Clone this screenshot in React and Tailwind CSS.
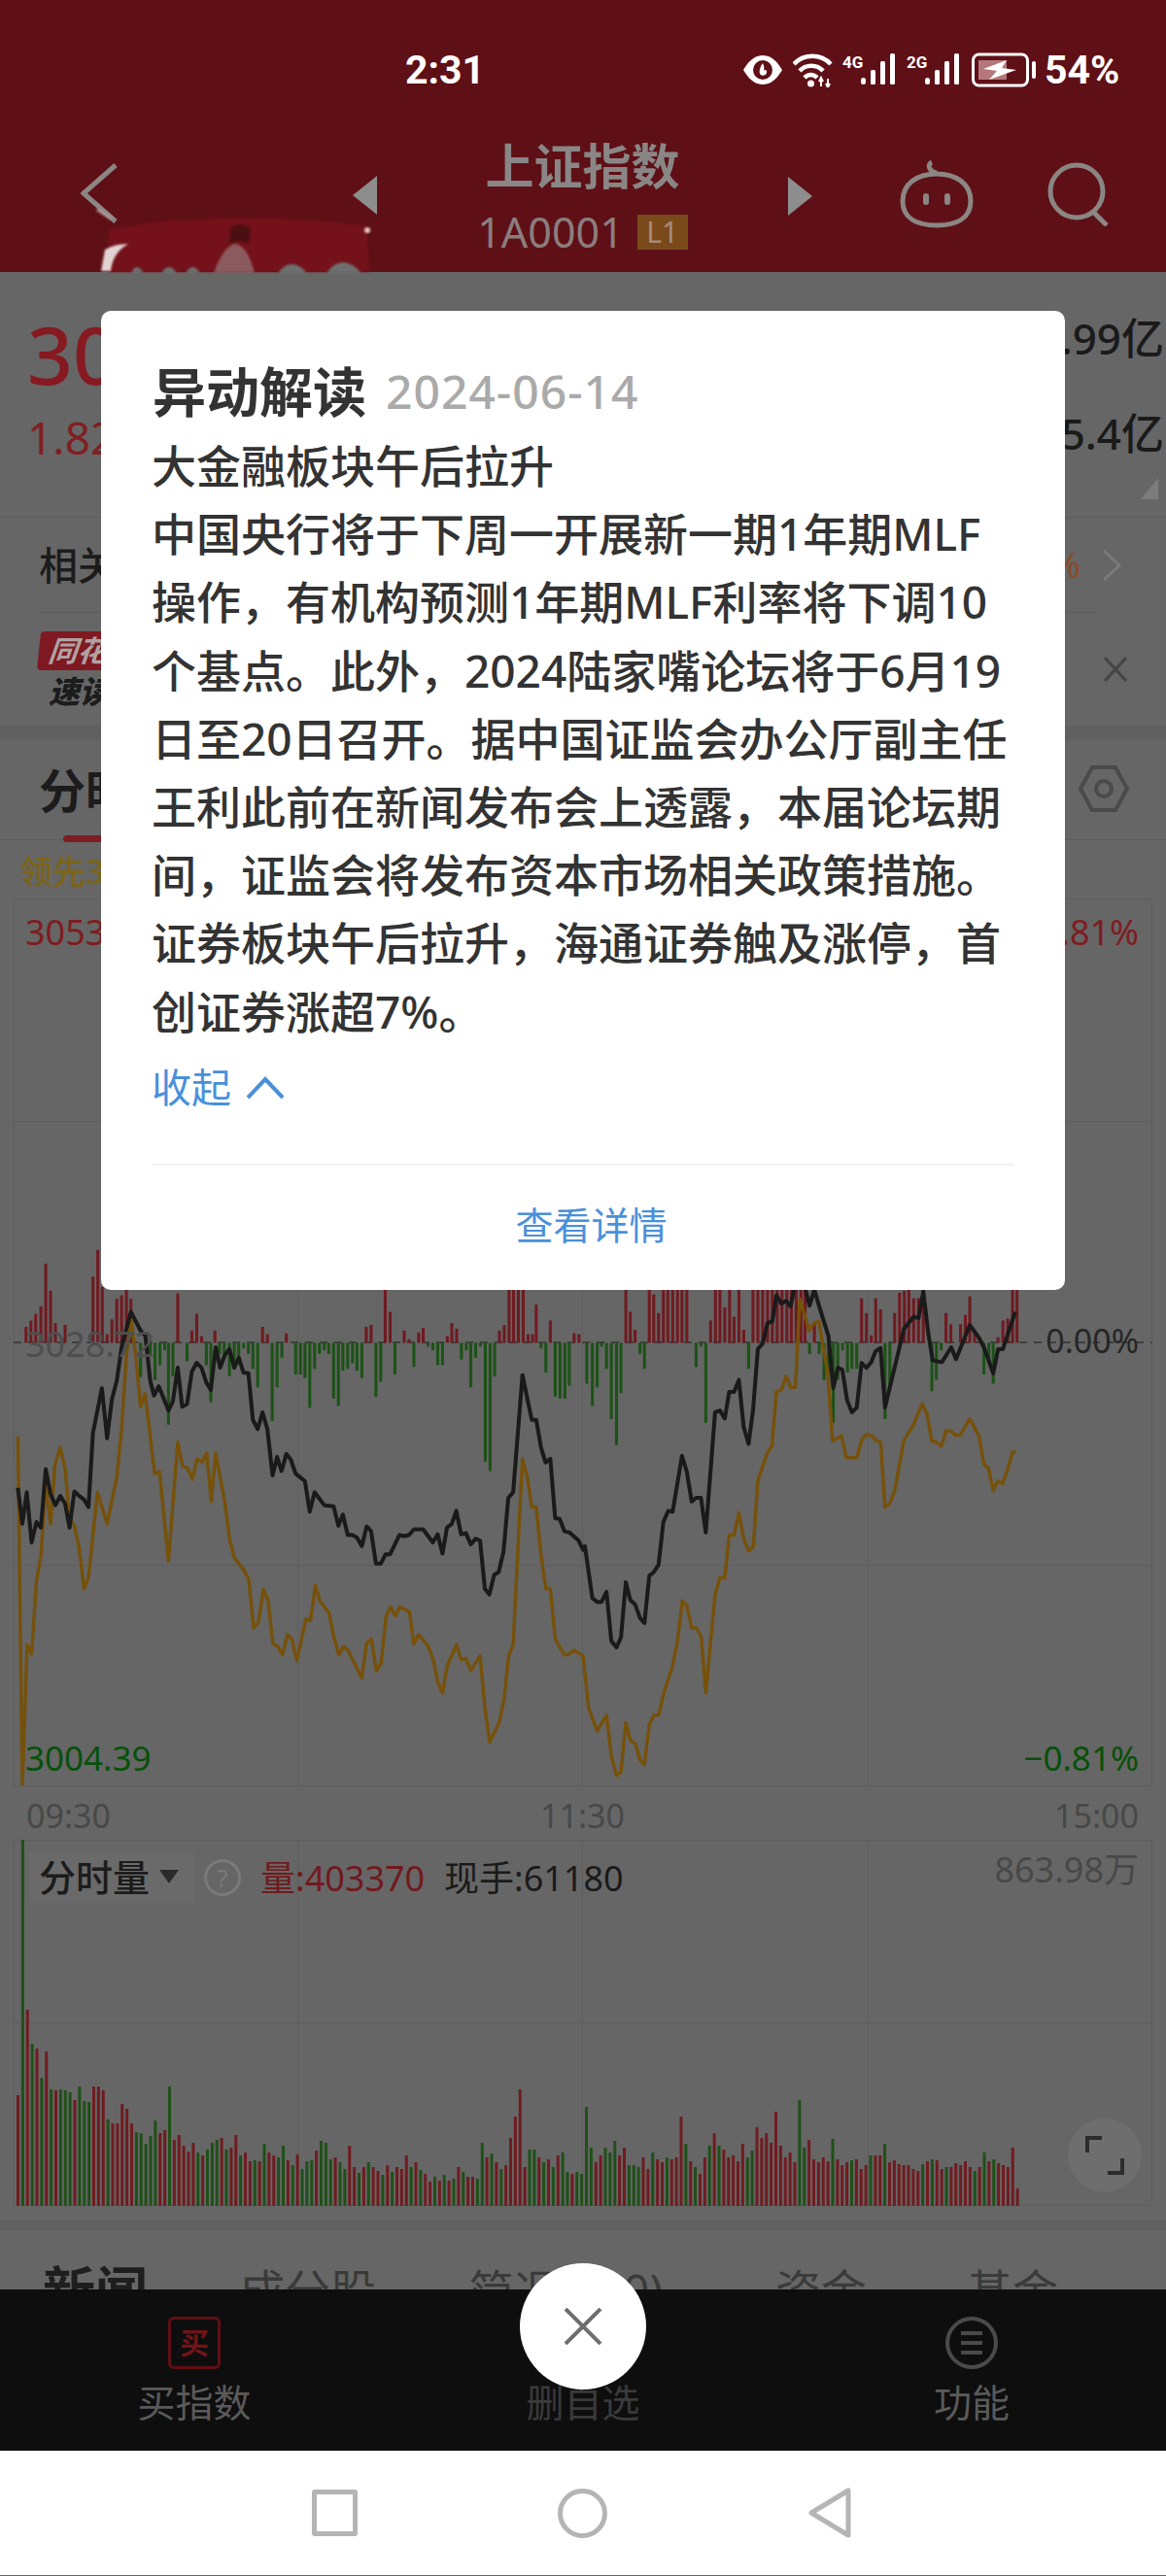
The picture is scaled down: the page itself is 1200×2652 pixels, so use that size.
import React from 'react';

// chart traces are read off at 2.613x, second half starts at 1568 in that scale
const parse = (s, dx = 0) => s.trim().split(/\s+/).map((p) => {
  const [x, y] = p.split(',').map(Number);
  return `${x + dx},${y}`;
}).join(' ');

const blackLine = parse('48,608 60,705 72,620 85,755 98,700 110,715 123,558 136,625 149,655 162,630 175,650 187,715 200,618 213,630 226,640 238,660 250,460 274,340 288,475 301,370 314,320 327,230 352,135 365,160 378,185 391,200 404,320 414,360 427,335 453,400 465,375 478,285 490,390 503,383 516,295 529,272 542,285 555,325 567,345 580,230 592,285 605,250 617,235 630,285 642,258 655,298 668,300 680,425 693,450 706,405 719,450 733,575 745,525 757,563 770,517 782,532 795,570 820,590 833,672 846,620 872,655 897,658 910,710 922,680 935,735 948,735 960,742 973,765 986,712 998,725 1011,812 1024,812 1037,787 1049,787 1074,735 1087,738 1100,735 1113,720 1138,720 1164,755 1177,733 1190,785 1202,715 1215,705 1227,670 1240,733 1253,730 1266,760 1279,745 1291,750 1304,880 1316,895 1329,842 1341,835 1354,780 1367,635 1380,620 1405,305 1430,425 1442,425 1455,500 1467,540 1480,530 1493,690 1505,692 1518,725 1531,728 1556,750 1568,775')
  + ' ' + parse('5,765 25,905 38,915 50,915 63,888 76,1020 90,1037 102,1010 115,862 127,910 140,922 153,958 165,972 178,845 190,835 203,815 216,700 229,670 241,672 266,522 279,565 292,645 304,635 317,635 330,728 355,405 368,400 381,422 393,350 406,350 419,318 432,445 445,490 457,400 470,235 483,220 496,165 509,160 520,90 533,112 546,105 558,120 571,60 590,40 609,118 622,75 635,120 660,200 673,340 685,285 697,290 710,372 723,405 736,392 749,272 762,285 775,270 787,240 800,232 812,392 863,180 889,148 902,152 915,80 928,190 940,265 953,268 965,270 990,230 1003,262 1040,170 1065,205 1078,230 1103,300 1116,235 1129,235 1162,135', 1568);

const goldLine = parse('48,470 60,1410 73,1030 85,1055 98,860 110,790 123,600 136,705 148,545 162,500 175,555 187,690 200,710 213,770 226,880 238,850 262,620 288,705 314,580 327,450 340,250 352,155 365,250 378,390 390,355 403,460 416,570 429,565 453,805 478,485 491,550 504,555 517,585 530,530 543,540 556,515 568,645 580,515 605,650 618,750 630,795 656,830 669,855 682,985 695,970 708,882 721,910 734,1028 747,1035 760,1057 773,1003 785,1015 798,1073 823,960 835,965 848,870 860,912 885,945 898,1010 911,1057 924,1035 936,1045 973,1120 986,1025 999,1015 1012,1100 1025,1080 1038,955 1050,928 1063,952 1076,928 1101,942 1113,1028 1126,1003 1152,1035 1165,1070 1177,1130 1190,1160 1203,1085 1228,1030 1240,1070 1253,1067 1266,1100 1291,1060 1304,1200 1317,1292 1342,1240 1355,1180 1368,1060 1380,1030 1405,530 1418,580 1430,660 1442,660 1455,790 1468,880 1480,880 1493,1015 1518,1058 1531,1055 1544,1045 1568,1060')
  + ' ' + parse('15,1200 38,1262 63,1220 76,1330 90,1382 102,1372 115,1240 128,1290 140,1295 153,1340 165,1352 178,1245 190,1220 203,1220 216,1165 241,1085 254,1020 267,912 279,925 292,985 305,985 318,1010 330,1160 355,895 368,850 381,850 393,735 406,735 419,675 432,745 445,778 458,765 470,590 495,515 508,495 520,350 533,345 546,308 558,338 571,338 583,100 608,185 621,165 634,160 658,300 671,482 695,468 708,527 736,527 749,480 762,465 775,467 787,480 800,485 812,660 825,650 838,615 863,480 888,440 912,382 925,410 938,482 950,485 963,497 976,455 989,455 1002,467 1015,465 1040,422 1065,470 1078,545 1090,555 1103,615 1116,590 1128,597 1141,560 1155,512 1165,512', 1568);

// [x, height], negative is a green bar under the zero line
const macdLeft = [[70,43],[83,60],[96,78],[110,98],[123,213],[136,140],[149,53],[175,48],[250,178],[263,250],[275,150],[288,23],[301,63],[314,118],[327,128],[340,148],[352,118],[378,-92],[404,-30],[417,-100],[430,-60],[443,-20],[453,-220],[465,-90],[478,133],[503,-50],[516,33],[529,78],[542,18],[555,-60],[567,-160],[578,33],[590,-30],[603,-40],[617,-90],[630,-70],[642,-40],[655,-15],[668,-30],[680,-70],[693,-120],[706,43],[719,23],[732,-210],[745,-120],[758,-40],[770,25],[795,-85],[808,-85],[820,-95],[833,-175],[846,-70],[859,-30],[872,-20],[884,-30],[897,-150],[910,-170],[922,-75],[935,-70],[948,-55],[960,-75],[973,-95],[985,43],[998,48],[1011,-145],[1024,-105],[1036,250],[1049,83],[1062,-85],[1087,33],[1100,10],[1113,-65],[1126,28],[1138,40],[1151,-10],[1164,-20],[1177,-60],[1190,-60],[1203,18],[1215,53],[1228,38],[1241,-45],[1254,-20],[1266,-120],[1279,-40],[1292,-10],[1305,-320],[1318,-345],[1330,-90],[1343,33],[1356,48],[1369,200],[1381,200],[1394,200],[1407,200],[1420,23],[1432,23],[1442,103],[1455,-15],[1468,-80],[1480,60],[1493,-145],[1506,-150],[1519,-150],[1531,-115],[1544,26],[1557,23]];
const macdRight = [[10,-110],[25,-170],[38,-120],[50,-10],[63,-70],[76,-205],[90,-275],[102,-135],[115,250],[127,83],[140,35],[153,-30],[165,-70],[178,200],[190,130],[203,80],[216,200],[228,200],[241,190],[254,200],[266,200],[279,200],[304,-65],[317,-10],[330,-215],[343,60],[356,200],[368,200],[381,95],[394,200],[406,70],[419,200],[432,35],[445,-70],[457,200],[470,200],[483,200],[496,200],[509,200],[522,200],[535,200],[548,200],[560,200],[573,200],[586,200],[597,200],[609,-30],[622,50],[635,-30],[648,-100],[660,-105],[673,-215],[685,-100],[698,-20],[711,-80],[723,-70],[736,-70],[749,120],[762,80],[775,20],[787,120],[800,90],[812,-205],[825,-120],[838,80],[851,135],[864,140],[876,145],[889,120],[902,120],[915,140],[938,-130],[950,-100],[963,-20],[976,80],[989,50],[1015,50],[1028,75],[1040,125],[1053,30],[1078,-85],[1091,-50],[1103,-110],[1116,15],[1129,60],[1142,65],[1155,150],[1167,150]];
const macd = [...macdLeft, ...macdRight.map(([x, h]) => [x + 1568, h])];

// minute volume, negative is green
const volumes = [114,-377,202,-167,162,-132,159,-120,119,-120,-119,-117,109,-123,-108,-107,123,123,119,-89,85,85,105,100,85,-76,-75,-64,-72,-88,75,78,-123,68,73,62,56,65,-55,52,-58,-65,-68,70,-58,60,73,-52,55,46,-47,46,-64,55,52,-50,-62,47,-42,53,-38,-46,-47,57,-67,-65,-48,50,-45,-38,62,40,-34,40,-45,40,36,-32,42,-35,40,38,52,-40,45,-37,33,25,-30,26,-32,26,-28,40,-35,30,30,-28,
  -65,50,-54,45,-38,42,70,92,120,40,-58,-58,50,-45,48,-40,52,-55,-35,33,-35,-33,-102,-60,45,52,-60,-55,-67,52,60,-42,-42,-40,50,38,-55,48,45,-50,48,50,92,-64,46,-40,33,50,-62,75,-62,58,50,52,46,64,-50,-57,81,70,75,65,97,62,50,55,45,-109,-60,68,48,45,50,46,-69,48,42,45,-47,48,38,42,-52,52,52,-64,45,47,43,42,42,38,36,-43,46,-48,47,38,-40,40,44,42,46,40,-36,40,-55,46,-48,44,42,40,60,18];

const bodyLines = [
  '大金融板块午后拉升',
  '中国央行将于下周一开展新一期1年期MLF',
  '操作，有机构预测1年期MLF利率将下调10',
  '个基点。此外，2024陆家嘴论坛将于6月19',
  '日至20日召开。据中国证监会办公厅副主任',
  '王利此前在新闻发布会上透露，本届论坛期',
  '间，证监会将发布资本市场相关政策措施。',
  '证券板块午后拉升，海通证券触及涨停，首',
  '创证券涨超7%。',
];

function SignalBars({ label }) {
  return (
    <svg width="56" height="36" viewBox="0 0 56 36" fill="white">
      <text x="0" y="16" fontSize="17" fontWeight="700" fontFamily="Roboto, sans-serif">{label}</text>
      <rect x="19" y="26" width="5" height="7" rx="2.5" />
      <rect x="29" y="18" width="5" height="15" rx="1.5" />
      <rect x="39" y="9" width="5" height="24" rx="1.5" />
      <rect x="49" y="1" width="5" height="32" rx="1.5" />
    </svg>
  );
}

function StatusBar() {
  return (
    <div className="flex items-start h-[146px] pl-[417px] pt-[50px] text-white">
      <span className="font-['Roboto',sans-serif] font-bold text-[41px] leading-[44px] w-[347px]">2:31</span>
      <div className="flex items-center h-[44px]">
        <svg width="42" height="36" viewBox="0 0 42 36">
          <path d="M1 18 C8 6 15 3 21 3 C27 3 34 6 41 18 C34 30 27 33 21 33 C15 33 8 30 1 18 Z" fill="white" />
          <circle cx="21" cy="18" r="10" fill="#5e1016" />
          <path d="M21 11 C18 15 17 19 18 22 C20 25 24 24 25 21 C26 18 23 17 22 19 C23 16 22 13 21 11 Z" fill="white" />
        </svg>
        <svg className="ml-[10px]" width="42" height="36" viewBox="0 0 42 36" fill="none" stroke="white" strokeWidth="4.5">
          <path d="M1 12 C11 1 29 1 39 12" />
          <path d="M7 19 C13 12 25 12 31 19" />
          <path d="M12 26 C16 22 21 22 25 26" />
          <circle cx="18.5" cy="32" r="3.5" fill="white" stroke="none" />
          <path d="M29 27 L29 35 M27 30 L29 26 L31 30 M36 35 L36 27 M34 32 L36 36 L38 32" strokeWidth="2" />
        </svg>
        <div className="ml-[9px]"><SignalBars label="4G" /></div>
        <div className="ml-[10px]"><SignalBars label="2G" /></div>
        <svg className="ml-[11px]" width="68" height="36" viewBox="0 0 68 36">
          <rect x="1.5" y="2" width="56" height="32" rx="6" fill="none" stroke="white" strokeWidth="3" />
          <rect x="7" y="8" width="29" height="20" fill="#b4787c" />
          <path d="M36 8 L12 17 L26 19 L18 28 L46 18 L31 16 Z" fill="white" />
          <rect x="62" y="9" width="4" height="18" rx="2" fill="white" />
        </svg>
        <span className="ml-[7px] font-['Roboto',sans-serif] font-bold text-[41px] leading-[44px] w-[80px]">54%</span>
      </div>
    </div>
  );
}

function TitleBar() {
  return (
    <div className="flex items-start h-[134px] pl-[83px] pt-[1px]">
      <svg className="mt-[21px]" width="38" height="62" viewBox="0 0 38 62" fill="none" stroke="#8b8683" strokeWidth="5">
        <path d="M36 2 L3 31 L36 60" />
      </svg>
      <svg className="ml-[242px] mt-[34px]" width="25" height="40" viewBox="0 0 25 40" fill="#8d8d8d">
        <path d="M25 0 L25 40 L0 20 Z" />
      </svg>
      <div className="flex flex-col items-center w-[423px]">
        <span className="-mt-[1px] font-bold text-[50px] leading-[50px] text-[#8a8686]">上证指数</span>
        <div className="flex items-center mt-[25px] h-[36px]">
          <span className="text-[43px] leading-[36px] text-[#8b7e7e]">1A0001</span>
          <span className="ml-[14px] flex items-center justify-center w-[52px] h-[36px] bg-[#7a4a1a] text-[#a98a7a] text-[30px] leading-[36px]">L1</span>
        </div>
      </div>
      <svg className="mt-[35px]" width="25" height="40" viewBox="0 0 25 40" fill="#8d8d8d">
        <path d="M0 0 L25 20 L0 40 Z" />
      </svg>
      <svg className="ml-[90px] mt-[18px]" width="76" height="70" viewBox="0 0 76 70" fill="none" stroke="#8b8683" strokeWidth="5">
        <path d="M33 2 C28 4 30 12 38 13" />
        <path d="M3 42 C3 24 18 14 38 14 C58 14 73 24 73 42 C73 60 58 67 38 67 C18 67 3 60 3 42 Z" />
        <rect x="24" y="34" width="6" height="12" rx="3" fill="#8b8683" stroke="none" />
        <rect x="46" y="34" width="6" height="12" rx="3" fill="#8b8683" stroke="none" />
      </svg>
      <svg className="ml-[76px] mt-[20px]" width="64" height="66" viewBox="0 0 64 66" fill="none" stroke="#8b8683" strokeWidth="5">
        <circle cx="30" cy="30" r="27" />
        <path d="M47 51 L61 65" />
      </svg>
    </div>
  );
}

function MainChart() {
  return (
    <svg className="block mx-[14px]" width="1172" height="914" viewBox="0 0 1172 914">
      <g stroke="#5d5d5d" strokeWidth="1" fill="none">
        <rect x="0.5" y="0.5" width="1171" height="913" />
        <path d="M0 229.5 H1172 M0 686.5 H1172 M292.5 0 V914 M585.5 0 V914 M879.5 0 V914" />
      </g>
      <path d="M0 457 H1172" stroke="#3f3f3f" strokeWidth="2" strokeDasharray="8 7" />
      <g transform="translate(-14 374) scale(0.3827)">
        {macd.map(([x, h]) => (
          <rect key={x} x={x - 4} y={h > 0 ? 218 - h : 218} width="8" height={Math.abs(h)} fill={h > 0 ? '#701a20' : '#1c5216'} />
        ))}
        <polyline points={goldLine} fill="none" stroke="#76510a" strokeWidth="9" strokeLinejoin="round" />
        <polyline points={blackLine} fill="none" stroke="#1a1a1a" strokeWidth="10.5" strokeLinejoin="round" />
      </g>
    </svg>
  );
}

function VolumeChart() {
  return (
    <svg className="block mx-[14px]" width="1172" height="377" viewBox="0 0 1172 377">
      <g stroke="#5d5d5d" strokeWidth="1" fill="none">
        <rect x="0.5" y="0.5" width="1171" height="376" />
        <path d="M0 188.5 H1172 M292.5 0 V377 M585.5 0 V377 M879.5 0 V377" />
      </g>
      {volumes.map((v, i) => (
        <rect key={i} x={3 + i * 4.875} y={377 - Math.abs(v)} width="3" height={Math.abs(v)} fill={v > 0 ? '#701c20' : '#1f5018'} />
      ))}
    </svg>
  );
}

export default function App() {
  return (
    <div className="relative w-[1200px] h-[2652px] overflow-hidden bg-[#666666] font-['Noto_Sans','Noto_Sans_CJK_SC',sans-serif]">
      <header className="bg-[#5e1016]">
        <StatusBar />
        <TitleBar />
      </header>

      {/* quote */}
      <section className="flex justify-between h-[253px] border-b border-[#5c5c5c] pl-[28px] pr-[2px]">
        <div>
          <div className="mt-[38px] text-[82px] leading-[92px] font-medium text-[#861a20]">30</div>
          <div className="mt-[14px] text-[46px] leading-[52px] text-[#801f22]">1.82</div>
        </div>
        <div className="flex flex-col items-end">
          <div className="mt-[40px] text-[44px] leading-[56px] font-medium text-[#1a1a1a]">.99亿</div>
          <div className="mt-[42px] text-[44px] leading-[56px] font-medium text-[#1a1a1a]">5.4亿</div>
          <svg className="mt-[18px] mr-[6px]" width="18" height="22" viewBox="0 0 18 22" fill="#7c7c7c">
            <path d="M18 0 L18 22 L0 22 Z" />
          </svg>
        </div>
      </section>

      {/* related row */}
      <div className="flex items-center justify-between h-[98px] ml-[40px] mr-[70px] border-b border-[#5c5c5c]">
        <span className="text-[40px] font-medium text-[#1c1c1c]">相关</span>
        <div className="flex items-center -mr-[24px]">
          <span className="text-[36px] text-[#8a4a2a]">%</span>
          <svg className="ml-[22px]" width="20" height="32" viewBox="0 0 20 32" fill="none" stroke="#7a7a7a" strokeWidth="3">
            <path d="M2 1 L18 16 L2 31" />
          </svg>
        </div>
      </div>

      {/* news brief */}
      <div className="flex items-center justify-between h-[116px] pl-[40px] pr-[40px]">
        <div className="flex flex-col">
          <span className="w-[120px] h-[40px] rounded-[4px] -skew-x-6 bg-[#7f1a22] pl-[10px] text-[30px] leading-[40px] italic font-bold text-[#b0a2a2]">同花顺</span>
          <span className="mt-[6px] pl-[10px] text-[32px] leading-[32px] italic font-black text-[#1c1c1c]">速读</span>
        </div>
        <svg width="24" height="26" viewBox="0 0 24 26" fill="none" stroke="#454545" strokeWidth="3">
          <path d="M1 1 L23 25 M23 1 L1 25" />
        </svg>
      </div>
      <div className="h-[15px] bg-[#606060]" />

      {/* period tabs */}
      <div className="flex items-start justify-between h-[103px] border-b border-[#5c5c5c] pl-[40px] pr-[38px]">
        <div className="flex flex-col">
          <span className="mt-[24px] text-[48px] leading-[56px] font-bold text-[#1c1c1c] w-[96px]">分时</span>
          <span className="mt-[18px] ml-[25px] w-[60px] h-[7px] rounded-full bg-[#7d1c22]" />
        </div>
        <svg className="mt-[26px]" width="52" height="48" viewBox="0 0 52 48" fill="none" stroke="#4a4a4a" strokeWidth="4">
          <path d="M14 2 L38 2 L50 24 L38 46 L14 46 L2 24 Z" />
          <circle cx="26" cy="24" r="8" />
        </svg>
      </div>

      <div className="h-[60px] pl-[20px] pt-[5px] text-[34px] leading-[55px] font-medium text-[#7c6418]">领先3</div>

      <div className="relative">
        <MainChart />
        <span className="absolute left-[26px] top-[15px] text-[36px] leading-[40px] text-[#7e1c20]">3053</span>
        <span className="absolute right-[28px] top-[15px] text-[36px] leading-[40px] text-[#7e1c20]">.81%</span>
        <span className="absolute left-[26px] top-[438px] text-[36px] leading-[42px] text-[#4e4e4e]">3028.72</span>
        <span className="absolute right-[28px] top-[433px] text-[34px] leading-[44px] text-[#262626]">0.00%</span>
        <span className="absolute left-[26px] top-[865px] text-[35px] leading-[40px] text-[#08500a]">3004.39</span>
        <span className="absolute right-[28px] top-[865px] text-[35px] leading-[40px] text-[#08500a]">−0.81%</span>
      </div>

      {/* time axis */}
      <div className="flex justify-between h-[55px] pl-[27px] pr-[28px] pt-[10px] text-[34px] leading-[40px] text-[#484848]">
        <span>09:30</span>
        <span>11:30</span>
        <span>15:00</span>
      </div>

      <div className="relative">
        <VolumeChart />
        <div className="absolute left-[30px] top-[12px] flex items-center w-[170px] h-[52px] bg-[#6a6a6a] pl-[10px]">
          <span className="text-[38px] leading-[52px] font-medium text-[#1c1c1c]">分时量</span>
          <svg className="ml-[10px]" width="20" height="14" viewBox="0 0 20 14" fill="#2a2a2a">
            <path d="M0 0 L20 0 L10 14 Z" />
          </svg>
        </div>
        <div className="absolute left-[210px] top-[20px] flex items-center justify-center w-[38px] h-[38px] rounded-full border-[3px] border-[#7a7a7a] text-[26px] leading-[32px] text-[#7a7a7a]">?</div>
        <span className="absolute left-[268px] top-[18px] text-[36px] leading-[44px] text-[#701a1e]">量:403370</span>
        <span className="absolute left-[457px] top-[18px] text-[36px] leading-[44px] text-[#1a1a1a]">现手:61180</span>
        <span className="absolute right-[28px] top-[9px] text-[36px] leading-[44px] text-[#484848]">863.98万</span>
        <div className="absolute left-[1099px] top-[287px] flex items-center justify-center w-[76px] h-[76px] rounded-full bg-[#6e6e6e]">
          <svg width="42" height="42" viewBox="0 0 42 42" fill="none" stroke="#2c2c2c" strokeWidth="4">
            <path d="M3 18 L3 3 L18 3 M39 24 L39 39 L24 39" />
          </svg>
        </div>
      </div>

      {/* bottom tabs, cut off by the action bar */}
      <div className="mt-[15px] h-[10px] bg-[#606060]" />
      <div className="flex items-start h-[61px] overflow-hidden pl-[44px] pt-[34px] text-[47px] leading-[56px] whitespace-nowrap text-[#3a3a3a]">
        <span className="font-bold text-[54px] text-[#1e1e1e] w-[202px]">新闻</span>
        <span className="w-[236px]">成分股</span>
        <span className="w-[316px]">简况(F10)</span>
        <span className="w-[197px]">资金</span>
        <span>基金</span>
      </div>

      <div className="grid grid-cols-3 h-[166px] bg-[#0e0e0e] pt-[28px] text-[39px] leading-[40px]">
        <div className="flex flex-col items-center">
          <span className="flex items-center justify-center w-[54px] h-[54px] rounded-[6px] border-[3px] border-[#5e1016] text-[30px] font-bold text-[#6f1418]">买</span>
          <span className="mt-[14px] text-[#5a5a5a]">买指数</span>
        </div>
        <div className="flex flex-col items-center">
          <span className="h-[54px]" />
          <span className="mt-[14px] text-[#3a3a3a]">删自选</span>
        </div>
        <div className="flex flex-col items-center">
          <svg width="54" height="54" viewBox="0 0 54 54" fill="none" stroke="#4a4a4a" strokeWidth="4">
            <circle cx="27" cy="27" r="25" />
            <path d="M16 17 H38 M16 27 H38 M16 37 H38" />
          </svg>
          <span className="mt-[14px] text-[#5a5a5a]">功能</span>
        </div>
      </div>

      {/* system navigation */}
      <nav className="flex items-center h-[128px] bg-white pl-[321px]">
        <span className="w-[47px] h-[48px] rounded-[3px] border-[5px] border-[#b5b5b5]" />
        <span className="ml-[206px] w-[51px] h-[51px] rounded-full border-[5px] border-[#b5b5b5]" />
        <svg className="ml-[207px]" width="44" height="52" viewBox="0 0 44 52" fill="none" stroke="#b5b5b5" strokeWidth="5" strokeLinejoin="round">
          <path d="M41 3 L41 49 L3 26 Z" />
        </svg>
      </nav>

      {/* dialog */}
      <div className="absolute left-[104px] top-[320px] flex flex-col w-[992px] h-[1008px] rounded-[10px] bg-white pl-[53px] pr-[52px] pt-[48px]">
        <div className="flex items-center h-[70px]">
          <span className="text-[55px] leading-[70px] font-bold text-[#333333]">异动解读</span>
          <span className="ml-[20px] text-[48px] leading-[70px] tracking-[1px] font-medium text-[#aaaaaa]">2024-06-14</span>
        </div>
        <div className="mt-[6px] text-[46px] leading-[70.2px] font-medium -ml-[1px] whitespace-nowrap text-[#333333]">
          {bodyLines.map((line) => <div key={line}>{line}</div>)}
        </div>
        <div className="flex items-center h-[60px] mt-[14px] -ml-[1px] text-[41px] text-[#4a90d9]">
          <span>收起</span>
          <svg className="ml-[15px]" width="40" height="24" viewBox="0 0 40 24" fill="none" stroke="#4a90d9" strokeWidth="4">
            <path d="M2 22 L20 3 L38 22" />
          </svg>
        </div>
        <div className="mt-[48px] h-[2px] bg-[#f2f2f2]" />
        <div className="flex flex-1 items-center justify-center pl-[16px] pb-[6px] text-[39px] text-[#4a90d9]">查看详情</div>
      </div>

      {/* censored smudge under the header */}
      <svg className="absolute left-[90px] top-[215px] blur-[1px]" width="310" height="66" viewBox="0 0 310 66">
        <path d="M22 22 C80 6 220 6 288 18 L290 65 L20 65 Z" fill="#74111a" />
        <path d="M45 66 Q50 54 58 66 Z M76 66 Q84 54 92 66 Z M101 66 Q108 54 116 66 Z M196 66 Q210 48 226 66 Z M246 66 Q262 44 282 66 Z" fill="#6e7070" />
        <path d="M130 66 Q140 38 152 36 Q165 38 172 66 Z" fill="#8a5a5e" />
        <path d="M148 18 Q160 14 168 20 L166 36 Q155 30 146 36 Z" fill="#4a0f12" />
        <path d="M14 64 L18 42 Q28 36 42 36 Q26 45 24 64 Z" fill="#e3d4d4" />
        <path d="M10 0 L25 10" stroke="#a89292" strokeWidth="4" fill="none" />
        <circle cx="288" cy="22" r="3" fill="#e8c8c8" />
      </svg>

      {/* close button */}
      <button className="absolute left-[535px] top-[2330px] flex items-center justify-center w-[130px] h-[130px] rounded-full bg-white">
        <svg width="40" height="38" viewBox="0 0 40 38" fill="none" stroke="#6e6e6e" strokeWidth="4">
          <path d="M2 1 L38 37 M38 1 L2 37" />
        </svg>
      </button>
    </div>
  );
}
